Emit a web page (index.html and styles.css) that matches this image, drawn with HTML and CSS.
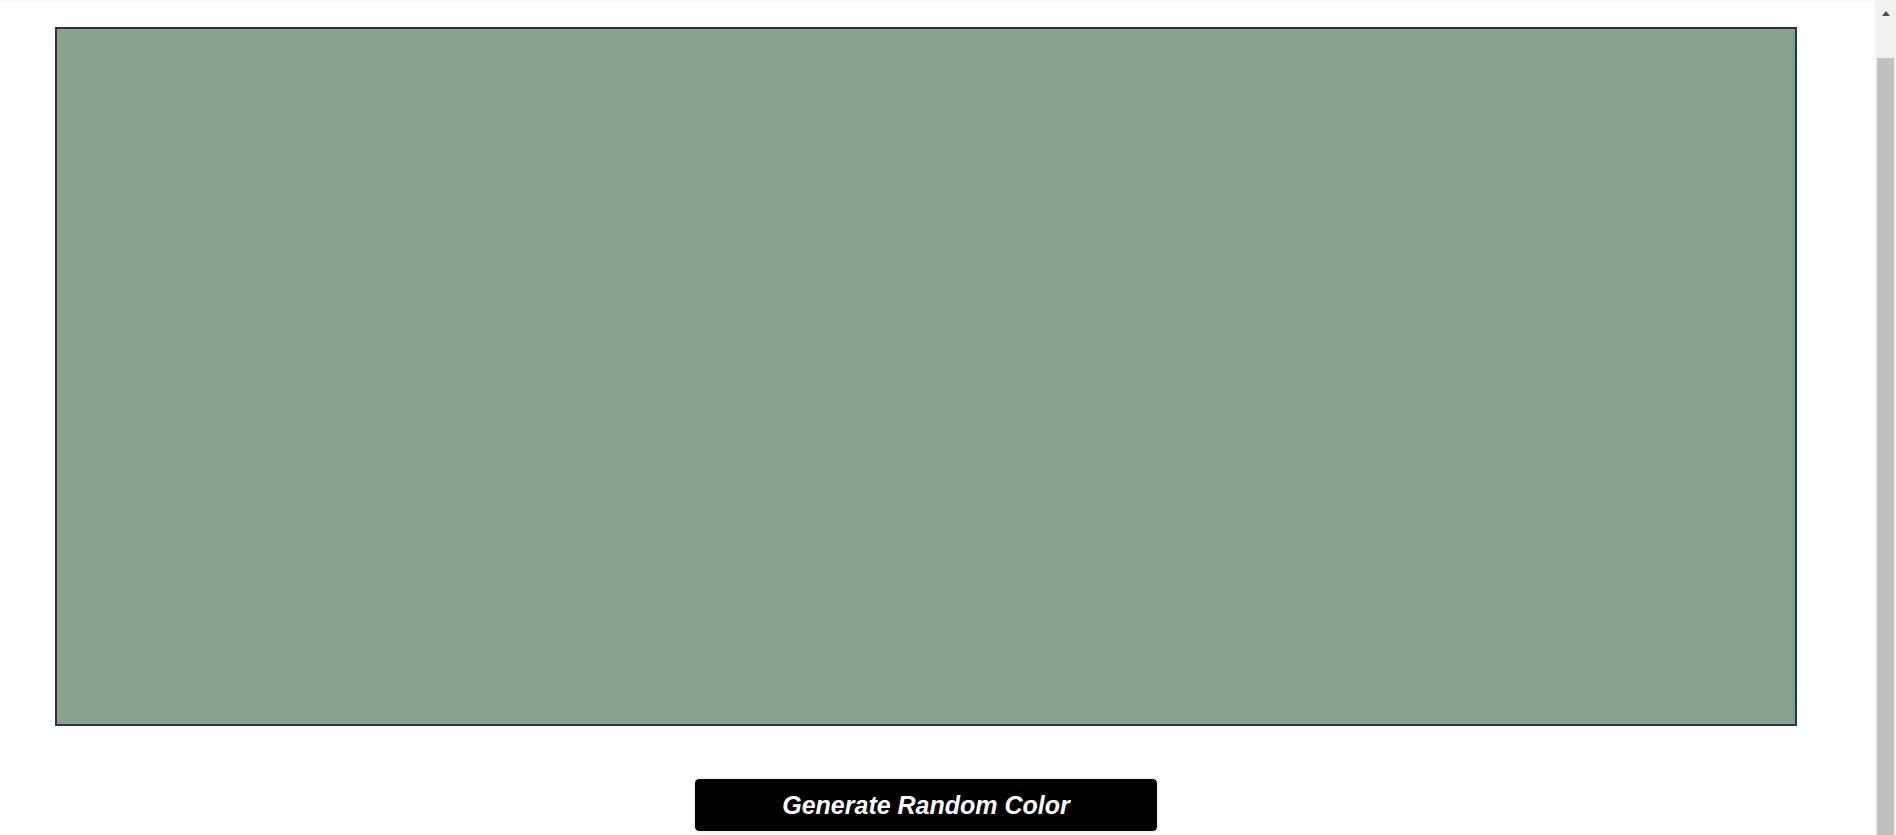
FILE: index.html
```html
<!DOCTYPE html>
<html lang="en">
<head>
<meta charset="utf-8">
<title>Random Color</title>
<link rel="stylesheet" href="styles.css">
</head>
<body>
<div class="topline"></div>
<main class="container">
  <div class="swatch"></div>
  <div class="actions">
    <button class="generate" type="button">Generate Random Color</button>
  </div>
</main>
<div class="scrollbar" aria-hidden="true">
  <div class="scroll-arrow"></div>
  <div class="scroll-thumb"></div>
</div>
</body>
</html>
```
FILE: styles.css
```css
html, body {
  margin: 0;
  padding: 0;
  background: #ffffff;
}
.topline {
  height: 2px;
  background: #fcf8f5;
}
.container {
  width: 1742px;
  margin-left: 55px;
  padding-top: 25px;
  padding-bottom: 4px;
  display: flex;
  flex-direction: column;
  align-items: center;
}
.swatch {
  box-sizing: border-box;
  width: 100%;
  height: 699px;
  border: 2px solid #333333;
  background: #86a38f;
}
.actions {
  margin-top: 53px;
  display: flex;
  justify-content: center;
}
.generate {
  width: 462px;
  height: 52px;
  background: #000000;
  color: #ffffff;
  border: none;
  border-radius: 4px;
  outline: 2px solid #edf4fd;
  outline-offset: 0;
  font-family: "Liberation Sans", Arial, sans-serif;
  font-size: 25px;
  font-weight: bold;
  font-style: italic;
  cursor: pointer;
}
.scrollbar {
  position: fixed;
  top: 0;
  right: 0;
  width: 21px;
  height: 100%;
  background: #f1f1f1;
  display: flex;
  flex-direction: column;
  align-items: center;
}
.scroll-arrow {
  margin-top: 11px;
  width: 0;
  height: 0;
  border-left: 4px solid transparent;
  border-right: 4px solid transparent;
  border-bottom: 5px solid #505050;
}
.scroll-thumb {
  margin-top: 42px;
  width: 17px;
  flex: 1;
  background: #c1c1c1;
}
```
